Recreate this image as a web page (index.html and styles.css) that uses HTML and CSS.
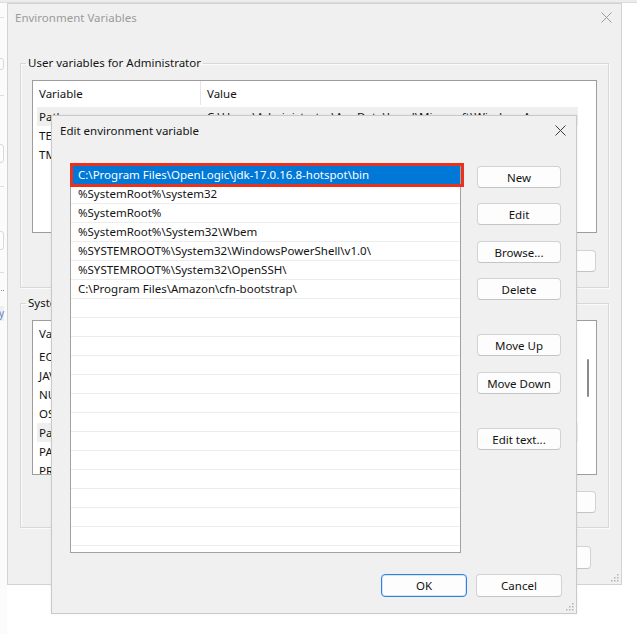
FILE: index.html
```html
<!DOCTYPE html>
<html>
<head>
<meta charset="utf-8">
<title>Edit environment variable</title>
<link rel="stylesheet" href="styles.css">
</head>
<body>
<div class="desktop">
  <div class="topband"></div>

  <div class="win back-win">
    <div class="bk bk-line l1"></div>
    <div class="bk bk-box b1"></div>
    <div class="bk bk-line l2"></div>
    <div class="bk bk-box b2"></div>
    <div class="bk bk-line l3"></div>
    <div class="bk bk-box b3"></div>
    <div class="bk bk-line l4"></div>
    <div class="bk bk-dots"></div>
    <div class="bk bk-row">y</div>
  </div>

  <div class="win env-win">
    <div class="titlebar">
      <span class="title">Environment Variables</span>
      <svg class="close" viewBox="0 0 11 11"><path d="M0.5 0.5 L10.5 10.5 M10.5 0.5 L0.5 10.5" /></svg>
    </div>

    <fieldset class="group user-group">
      <legend>User variables for Administrator</legend>
      <div class="varlist user-list">
        <div class="cols">
          <div class="vhead"><div class="c1">Variable</div><div class="c2">Value</div></div>
          <div class="vrow sel"><div class="c1">Path</div><div class="c2">C:\Users\Administrator\AppData\Local\Microsoft\WindowsApps;</div></div>
          <div class="vrow"><div class="c1">TEMP</div><div class="c2">%USERPROFILE%\AppData\Local\Temp</div></div>
          <div class="vrow"><div class="c1">TMP</div><div class="c2">%USERPROFILE%\AppData\Local\Temp</div></div>
        </div>
        <div class="vscroll"></div>
      </div>
      <div class="btnrow">
        <button>New...</button><button>Edit...</button><button>Delete</button>
      </div>
    </fieldset>

    <fieldset class="group sys-group">
      <legend>System variables</legend>
      <div class="varlist sys-list">
        <div class="cols">
          <div class="vhead"><div class="c1">Variable</div><div class="c2">Value</div></div>
          <div class="vrow"><div class="c1">EC2LAUNCH</div><div class="c2">1</div></div>
          <div class="vrow"><div class="c1">JAVA_HOME</div><div class="c2">C:\Program Files\OpenLogic\jdk-17.0.16.8-hotspot\</div></div>
          <div class="vrow"><div class="c1">NUMBER_OF_CPUS</div><div class="c2">2</div></div>
          <div class="vrow"><div class="c1">OS</div><div class="c2">Windows_NT</div></div>
          <div class="vrow sel"><div class="c1">Path</div><div class="c2">C:\Program Files\OpenLogic\jdk-17.0.16.8-hotspot\bin;</div></div>
          <div class="vrow"><div class="c1">PATHEXT</div><div class="c2">.COM;.EXE;.BAT;.CMD;.VBS;.JS</div></div>
          <div class="vrow"><div class="c1">PROCESSOR</div><div class="c2">AMD64</div></div>
        </div>
        <div class="vscroll"><div class="thumb"></div></div>
      </div>
      <div class="btnrow">
        <button>New...</button><button>Edit...</button><button>Delete</button>
      </div>
    </fieldset>

    <div class="btnrow env-footer">
      <button class="wide">OK</button><button class="wide">Cancel</button>
    </div>
    <svg class="grip" viewBox="0 0 8 8"><g><rect x="6" y="0" width="1.5" height="1.5"/><rect x="3" y="3" width="1.5" height="1.5"/><rect x="6" y="3" width="1.5" height="1.5"/><rect x="0" y="6" width="1.5" height="1.5"/><rect x="3" y="6" width="1.5" height="1.5"/><rect x="6" y="6" width="1.5" height="1.5"/></g></svg>
  </div>

  <div class="win edit-dlg">
    <div class="titlebar">
      <span class="title">Edit environment variable</span>
      <svg class="close" viewBox="0 0 11 11"><path d="M0.5 0.5 L10.5 10.5 M10.5 0.5 L0.5 10.5" /></svg>
    </div>
    <div class="dlg-body">
      <div class="pathlist">
        <div class="prow sel">C:\Program Files\OpenLogic\jdk-17.0.16.8-hotspot\bin</div>
        <div class="prow">%SystemRoot%\system32</div>
        <div class="prow">%SystemRoot%</div>
        <div class="prow">%SystemRoot%\System32\Wbem</div>
        <div class="prow">%SYSTEMROOT%\System32\WindowsPowerShell\v1.0\</div>
        <div class="prow">%SYSTEMROOT%\System32\OpenSSH\</div>
        <div class="prow">C:\Program Files\Amazon\cfn-bootstrap\</div>
        <div class="prow"></div><div class="prow"></div><div class="prow"></div>
        <div class="prow"></div><div class="prow"></div><div class="prow"></div>
        <div class="prow"></div><div class="prow"></div><div class="prow"></div>
        <div class="prow"></div><div class="prow"></div><div class="prow"></div>
        <div class="prow"></div>
      </div>
      <div class="side">
        <button class="s-new">New</button>
        <button class="s-edit">Edit</button>
        <button class="s-browse">Browse...</button>
        <button class="s-delete">Delete</button>
        <button class="s-up">Move Up</button>
        <button class="s-down">Move Down</button>
        <button class="s-text">Edit text...</button>
      </div>
    </div>
    <div class="dlg-footer">
      <button class="wide default">OK</button><button class="wide">Cancel</button>
    </div>
    <svg class="grip" viewBox="0 0 8 8"><g><rect x="6" y="0" width="1.5" height="1.5"/><rect x="3" y="3" width="1.5" height="1.5"/><rect x="6" y="3" width="1.5" height="1.5"/><rect x="0" y="6" width="1.5" height="1.5"/><rect x="3" y="6" width="1.5" height="1.5"/><rect x="6" y="6" width="1.5" height="1.5"/></g></svg>
  </div>

  <div class="redbox"></div>
</div>
</body>
</html>
```

FILE: styles.css
```css
* { box-sizing: border-box; }
html, body { margin: 0; padding: 0; }
body {
  width: 637px;
  height: 634px;
  background: #ffffff;
  font-family: "Segoe UI", "Noto Sans", sans-serif;
  font-size: 11.5px;
  color: #131313;
  overflow: hidden;
}
.desktop { position: relative; width: 637px; height: 634px; overflow: hidden; }
.topband { height: 3px; background: #ececec; border-bottom: 1px solid #dcdcdc; }

.win {
  position: absolute;
  background: #f0f0f0;
  border: 1px solid #d2d2d2;
  display: flex;
  flex-direction: column;
}

/* window further behind, only its right edge shows */
.back-win {
  left: -200px; top: 3px; width: 207px; height: 631px;
  background: #fbfbfb; border: none;
  padding-left: 150px;
}
.bk { width: 54px; flex: none; }
.bk-line { height: 1px; background: #dedede; }
.bk-box { border: 1px solid #d9d9d9; border-radius: 3px; background: #fdfdfd; }
.l1 { margin-top: 14px; }
.b1 { margin-top: 40px; height: 12px; }
.l2 { margin-top: 25px; }
.b2 { margin-top: 48px; height: 19px; }
.l3 { margin-top: 23px; }
.b3 { margin-top: 44px; height: 19px; }
.l4 { margin-top: 22px; }
.bk-dots { margin-top: 17px; height: 1px; border-top: 1px dotted #6a8fd0; }
.bk-row { margin-top: 15px; height: 15px; background: #efefef; text-align: right; padding-right: 0; color: #5a7fc0; line-height: 15px; font-size: 10px; }

/* Environment Variables window */
.env-win { left: 7px; top: 3px; width: 615px; height: 582px; }
.titlebar {
  display: flex;
  align-items: center;
  justify-content: space-between;
  height: 27px;
  padding: 0 9px 0 7px;
  flex: none;
}
.env-win .title { color: #9b9b9b; }
.close { width: 11px; height: 11px; }
.close path { stroke: #9b9b9b; stroke-width: 1; fill: none; }

.group {
  margin: 24px 12px 0;
  padding: 0 11px 15px;
  border: 1px solid #d8d8d8;
  box-shadow: inset 1px 1px 0 #fafafa, 1px 1px 0 #fafafa;
  min-width: 0;
}
.group legend { padding: 0 2px; margin-left: -6px; line-height: 16px; color: #131313; }
.sys-group { margin-top: 7px; padding-bottom: 14px; }

.varlist {
  margin-top: 9px;
  background: #ffffff;
  border: 1px solid #9d9d9d;
  display: flex;
  padding-left: 4px;
  overflow: hidden;
}
.user-list { height: 153px; }
.sys-list { height: 155px; }
.cols { flex: 1; min-width: 0; }
.vscroll { width: 18px; flex: none; display: flex; justify-content: center; }
.thumb { width: 2px; height: 38px; margin-top: 38px; margin-left: 2px; background: #8a8a8a; border-radius: 1px; }
.vhead, .vrow { display: flex; white-space: nowrap; overflow: hidden; }
.vhead { height: 26px; align-items: center; padding-bottom: 2px; }
.vrow { height: 19px; align-items: center; }
.vrow.sel { background: #efefef; }
.c1 { width: 164px; flex: none; padding-left: 2px; overflow: hidden; }
.vhead .c1 { height: 100%; display: flex; align-items: center; border-right: 1px solid #e6e6e6; }
.c2 { padding-left: 6px; }

.btnrow { display: flex; justify-content: flex-end; gap: 8px; margin-top: 17px; padding-right: 1px; }
.sys-group .btnrow { margin-top: 16px; }
button {
  width: 84px;
  height: 22px;
  padding: 0;
  font: inherit;
  color: #131313;
  background: #fdfdfd;
  border: 1px solid #d2d2d2;
  border-bottom-color: #c4c4c4;
  border-radius: 4px;
}
button.wide { width: 86px; height: 23px; }
.env-footer { margin-top: 18px; padding-right: 30px; gap: 9px; }

.grip { position: absolute; right: 2px; bottom: 2px; width: 8px; height: 8px; }
.grip rect { fill: #b4b4b4; }

/* Edit environment variable dialog */
.edit-dlg {
  left: 51px; top: 115px; width: 526px; height: 499px;
  border-color: #c9c9c9;
  box-shadow: 0 0 3px rgba(0,0,0,0.06);
}
.edit-dlg .titlebar { height: 29px; padding: 0 10px 0 8px; }
.edit-dlg .title { color: #141414; }
.edit-dlg .close path { stroke: #3a3a3a; }

.dlg-body { display: flex; align-items: flex-start; margin: 18px 0 0 18px; }
.pathlist {
  width: 391px;
  height: 390px;
  background: #ffffff;
  border: 1px solid #a2a2a2;
  padding-top: 2px;
  overflow: hidden;
  flex: none;
}
.prow {
  height: 19px;
  line-height: 18px;
  border-bottom: 1px solid #ededed;
  padding-left: 7px;
  white-space: nowrap;
}
.prow.sel { background: #0078d7; color: #ffffff; border-bottom-color: #0078d7; }

.side { display: flex; flex-direction: column; margin-left: 16px; width: 84px; }
.s-new { margin-top: 3px; }
.s-edit { margin-top: 15px; }
.s-browse { margin-top: 16px; }
.s-delete { margin-top: 15px; }
.s-up { margin-top: 34px; }
.s-down { margin-top: 16px; }
.s-text { margin-top: 34px; }

.dlg-footer { display: flex; justify-content: flex-end; gap: 9px; margin: 21px 14px 0 0; }
button.default { border-color: #2f82d6; box-shadow: inset 0 0 0 1px #d3e6f8; }

/* annotation drawn over the screenshot */
.redbox {
  position: absolute;
  left: 70px; top: 163px;
  width: 394px; height: 24px;
  border: 3px solid #e8321f;
}
```
